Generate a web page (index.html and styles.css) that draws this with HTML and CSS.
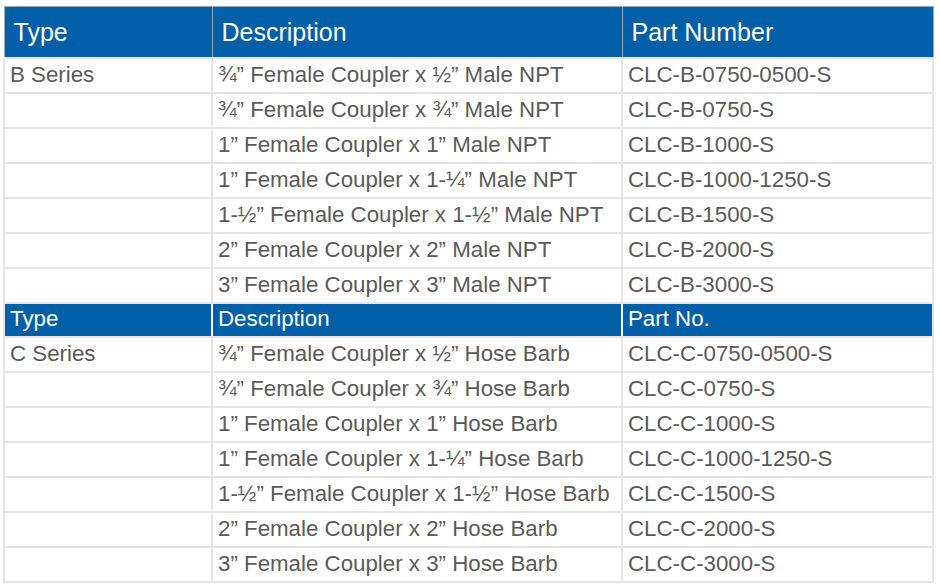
FILE: index.html
```html
<!DOCTYPE html>
<html lang="en">
<head>
<meta charset="utf-8">
<title>Couplers</title>
<link rel="stylesheet" href="styles.css">
</head>
<body>
<table class="parts">
  <colgroup>
    <col class="c-type">
    <col class="c-desc">
    <col class="c-part">
  </colgroup>
  <tr class="head-main">
    <th>Type</th><th>Description</th><th>Part Number</th>
  </tr>
  <tr><td>B Series</td><td>¾” Female Coupler x ½” Male NPT</td><td>CLC-B-0750-0500-S</td></tr>
  <tr><td></td><td>¾” Female Coupler x ¾” Male NPT</td><td>CLC-B-0750-S</td></tr>
  <tr><td></td><td>1” Female Coupler x 1” Male NPT</td><td>CLC-B-1000-S</td></tr>
  <tr><td></td><td>1” Female Coupler x 1-¼” Male NPT</td><td>CLC-B-1000-1250-S</td></tr>
  <tr><td></td><td>1-½” Female Coupler x 1-½” Male NPT</td><td>CLC-B-1500-S</td></tr>
  <tr><td></td><td>2” Female Coupler x 2” Male NPT</td><td>CLC-B-2000-S</td></tr>
  <tr><td></td><td>3” Female Coupler x 3” Male NPT</td><td>CLC-B-3000-S</td></tr>
  <tr class="head-sub">
    <th>Type</th><th>Description</th><th>Part No.</th>
  </tr>
  <tr><td>C Series</td><td>¾” Female Coupler x ½” Hose Barb</td><td>CLC-C-0750-0500-S</td></tr>
  <tr><td></td><td>¾” Female Coupler x ¾” Hose Barb</td><td>CLC-C-0750-S</td></tr>
  <tr><td></td><td>1” Female Coupler x 1” Hose Barb</td><td>CLC-C-1000-S</td></tr>
  <tr><td></td><td>1” Female Coupler x 1-¼” Hose Barb</td><td>CLC-C-1000-1250-S</td></tr>
  <tr><td></td><td>1-½” Female Coupler x 1-½” Hose Barb</td><td>CLC-C-1500-S</td></tr>
  <tr><td></td><td>2” Female Coupler x 2” Hose Barb</td><td>CLC-C-2000-S</td></tr>
  <tr><td></td><td>3” Female Coupler x 3” Hose Barb</td><td>CLC-C-3000-S</td></tr>
</table>
</body>
</html>
```

FILE: styles.css
```css
html, body {
  margin: 0;
  padding: 0;
  background: #ffffff;
}

body {
  padding: 6px 0 0 3px;
  font-family: "Liberation Sans", Arial, Helvetica, sans-serif;
}

.parts {
  border-collapse: collapse;
  width: 929px;
  table-layout: fixed;
  color: #5a5a5a;
  font-size: 22.3px;
}

.c-type { width: 208px; }
.c-desc { width: 410px; }
.c-part { width: 311px; }

.parts td,
.parts th {
  border: 2px solid #e6e6e6;
  padding: 0 0 0 5px;
  text-align: left;
  font-weight: normal;
  white-space: nowrap;
  vertical-align: middle;
  line-height: 26px;
}

.parts tr {
  height: 35px;
}

.head-main {
  height: 51px !important;
}

.head-main th {
  background: #035fa8;
  color: #ffffff;
  font-size: 25px;
  padding-left: 9px;
  padding-top: 0;
  border: 1px solid #9aa6b2;
}

.head-sub {
  height: 34px !important;
}

.head-sub th {
  background: #035fa8;
  color: #ffffff;
  font-size: 22.3px;
  border: 2px solid #e6e6e6;
  border-left-color: #ffffff;
  border-right-color: #ffffff;
  padding-bottom: 2px;
}

.head-sub th:first-child {
  border-left-color: #e6e6e6;
}

.head-sub th:last-child {
  border-right-color: #e6e6e6;
}
```
